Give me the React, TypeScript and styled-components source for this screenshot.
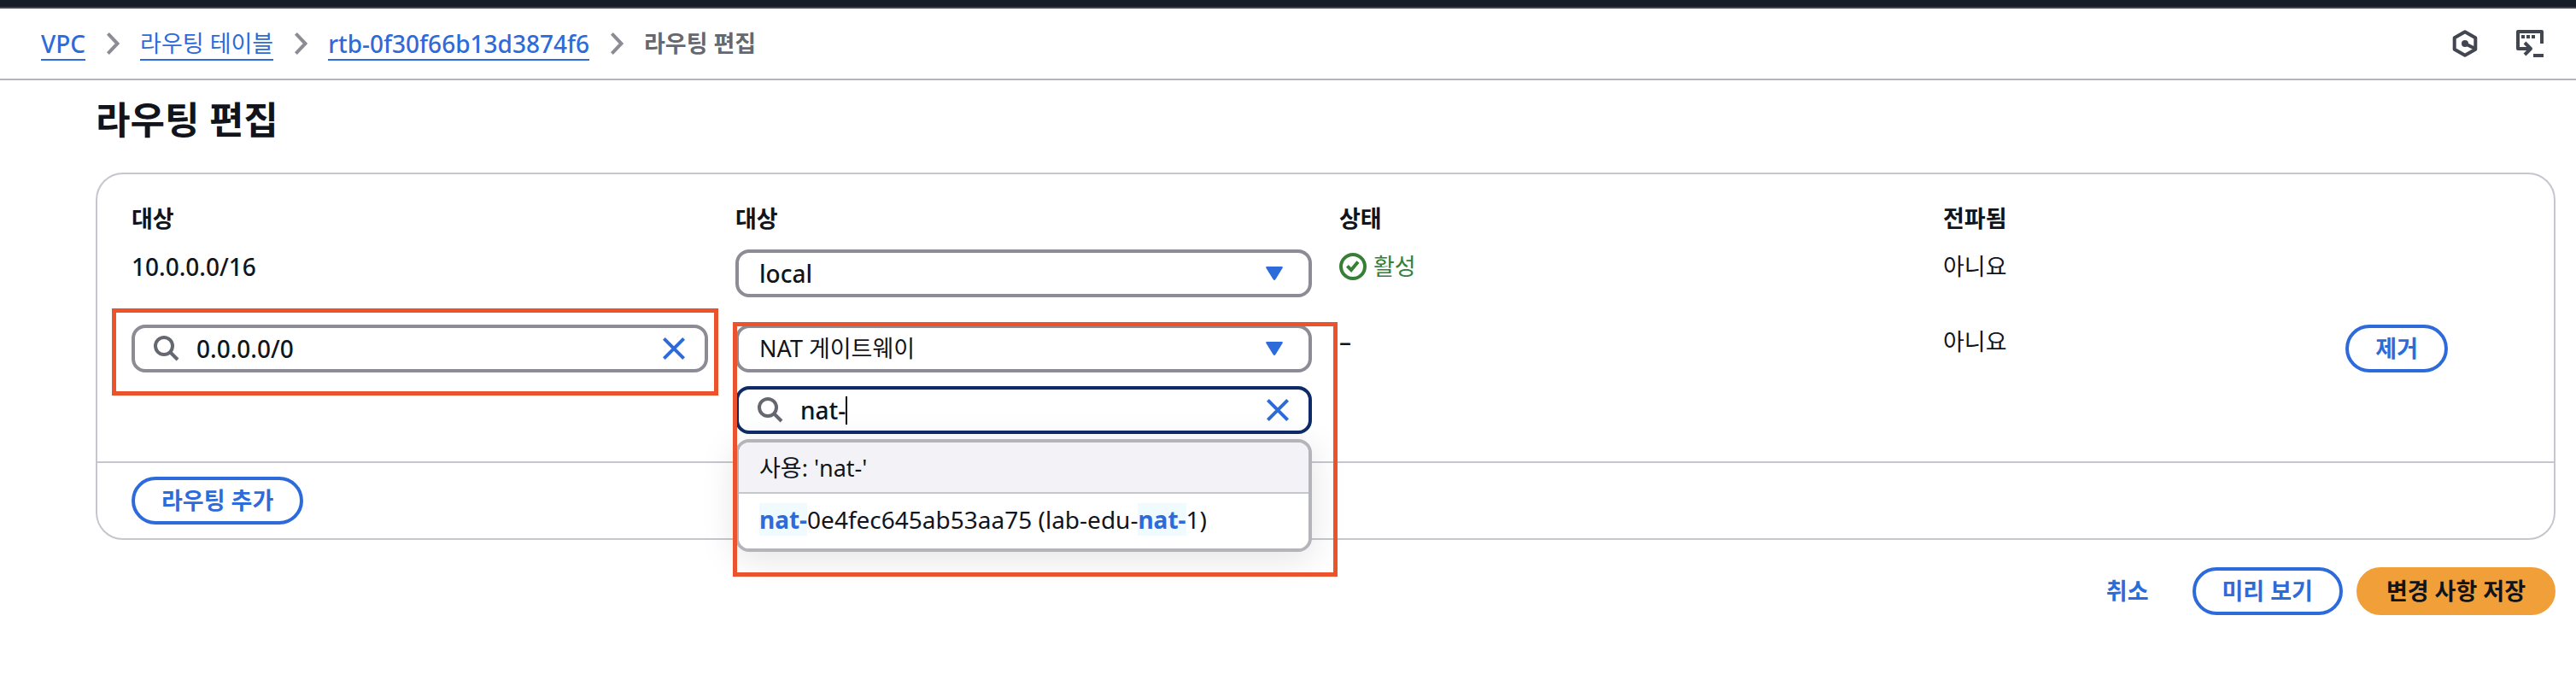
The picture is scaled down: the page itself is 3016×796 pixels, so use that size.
import React from 'react';
import styled, { createGlobalStyle } from 'styled-components';

const color = {
  text: '#11151b',
  muted: '#656871',
  link: '#2d6bdb',
  line: '#c6c6cd',
  control: '#8c8c94',
  focus: '#0f2b66',
  success: '#367f34',
  primary: '#f19f38',
  mark: '#eb532d',
};

const size = {
  latin: '28px',
  hangul: '27px',
};

const GlobalStyle = createGlobalStyle`
  *, *::before, *::after { box-sizing: border-box; }
  body {
    margin: 0;
    background: #fff;
    color: ${color.text};
    font: 400 28px/40px "Noto Sans", "Noto Sans CJK KR", sans-serif;
  }
  input, select, button { font: inherit; color: inherit; }
`;

const TopBar = styled.div`
  height: 10px;
  background: #161d26;
  border-bottom: 2px solid #424650;
`;

const Header = styled.header`
  display: flex;
  align-items: center;
  justify-content: space-between;
  height: 84px;
  padding: 0 38px 0 48px;
  border-bottom: 2px solid #b4b4bb;
`;

const Crumbs = styled.ol`
  display: flex;
  align-items: center;
  gap: 24px;
  margin: 0;
  padding: 0;
  list-style: none;
`;

const Crumb = styled.li`
  display: flex;
  align-items: center;
  gap: 24px;
  color: ${color.muted};
  font-size: ${size.hangul};
  font-weight: 700;
`;

const CrumbLink = styled.a<{ $hangul?: boolean }>`
  height: 40px;
  border-bottom: 2px solid ${color.link};
  color: ${color.link};
  font-size: ${(p) => (p.$hangul ? size.hangul : size.latin)};
  font-weight: ${(p) => (p.$hangul ? 400 : 500)};
  text-decoration: none;
`;

const Tools = styled.div`
  display: flex;
  gap: 44px;
`;

const IconButton = styled.button`
  display: flex;
  padding: 0;
  border: 0;
  background: none;
  cursor: pointer;
`;

const Main = styled.main`
  padding: 16px 24px 76px 112px;
`;

const Title = styled.h1`
  margin: 0 0 32px;
  font-size: 44px;
  line-height: 60px;
  font-weight: 700;
`;

const Panel = styled.section`
  border: 2px solid ${color.line};
  border-radius: 32px;
`;

const Routes = styled.table`
  display: block;
  padding: 32px 40px;
`;

const Group = styled.tbody`
  display: grid;
  gap: 32px;
  margin-top: 16px;
`;

const HeadGroup = styled.thead`
  display: block;
`;

const Row = styled.tr`
  display: grid;
  grid-template-columns: repeat(12, minmax(0, 1fr));
  column-gap: 32px;
`;

const HeadCell = styled.th<{ $span: number }>`
  grid-column: span ${(p) => p.$span};
  padding: 0;
  text-align: left;
  font-size: ${size.hangul};
  font-weight: 700;
`;

const Cell = styled.td<{ $span: number; $hangul?: boolean }>`
  grid-column: span ${(p) => p.$span};
  padding: 0;
  font-size: ${(p) => (p.$hangul ? size.hangul : size.latin)};
  font-weight: ${(p) => (p.$hangul ? 400 : 500)};
`;

const Status = styled.span`
  display: flex;
  align-items: center;
  gap: 8px;
  color: ${color.success};
`;

const Stack = styled.div`
  position: relative;
  display: grid;
  gap: 16px;
`;

const Highlight = styled.div<{ $inset: string }>`
  position: absolute;
  inset: ${(p) => p.$inset};
  z-index: 2;
  border: 5px solid ${color.mark};
  pointer-events: none;
`;

const SelectBox = styled.div`
  display: grid;
  align-items: center;
  color: ${color.link};

  & > * { grid-area: 1 / 1; }
  & > svg { justify-self: end; margin-right: 34px; pointer-events: none; }
`;

const Select = styled.select<{ $hangul?: boolean }>`
  appearance: none;
  width: 100%;
  height: 56px;
  padding: 0 60px 0 24px;
  border: 4px solid ${color.control};
  border-radius: 16px;
  background: #fff;
  color: ${color.text};
  font-size: ${(p) => (p.$hangul ? size.hangul : size.latin)};
  font-weight: ${(p) => (p.$hangul ? 400 : 500)};
`;

const SearchBox = styled.label<{ $focused?: boolean }>`
  display: flex;
  align-items: center;
  height: 56px;
  padding: 0 22px;
  border: 4px solid ${(p) => (p.$focused ? color.focus : color.control)};
  border-radius: 16px;
  background: #fff;
`;

const SearchInput = styled.input`
  field-sizing: content;
  min-width: 0;
  margin-left: 20px;
  padding: 0;
  border: 0;
  outline: 0;
  background: none;
`;

const TextCaret = styled.span`
  width: 2px;
  height: 33px;
  background: #000;
`;

const Spacer = styled.span`
  flex: 1;
`;

const Menu = styled.ul`
  position: absolute;
  z-index: 1;
  top: calc(100% + 6px);
  left: 0;
  right: 0;
  margin: 0;
  padding: 0;
  overflow: hidden;
  list-style: none;
  border: 4px solid #b4b4bb;
  border-radius: 16px;
  background: #fff;
  box-shadow: 0 8px 40px 2px rgba(0, 7, 22, 0.1);
`;

const Option = styled.li<{ $active?: boolean }>`
  padding: ${(p) => (p.$active ? '10px 24px 8px' : '10px 24px 14px')};
  background: ${(p) => (p.$active ? '#f3f3f7' : '#fff')};
  border-bottom: ${(p) => (p.$active ? `2px solid ${color.line}` : '0')};
  font-size: ${(p) => (p.$active ? size.hangul : size.latin)};
  font-weight: 400;
`;

const Match = styled.mark`
  background: #f0fbff;
  color: ${color.link};
  font-weight: 700;
`;

const PanelFooter = styled.div`
  padding: 16px 40px;
  border-top: 2px solid ${color.line};
`;

const Actions = styled.div`
  display: flex;
  justify-content: flex-end;
  gap: 16px;
  margin-top: 32px;
`;

const Button = styled.button<{ $kind?: 'primary' | 'link' }>`
  display: block;
  height: 56px;
  padding: 0 31px;
  border: 4px solid
    ${(p) => (p.$kind === 'primary' ? color.primary : p.$kind === 'link' ? 'transparent' : color.link)};
  border-radius: 28px;
  background: ${(p) => (p.$kind === 'primary' ? color.primary : 'transparent')};
  color: ${(p) => (p.$kind === 'primary' ? color.text : color.link)};
  font-size: ${size.hangul};
  font-weight: 700;
  line-height: 40px;
  white-space: nowrap;
  cursor: pointer;
`;

const Chevron = () => (
  <svg width="16" height="28" viewBox="0 0 16 28" fill="none" stroke={color.control} strokeWidth="4" aria-hidden="true">
    <path d="M2.400 2.400L13.500 14L2.400 25.600" />
  </svg>
);

const HexagonIcon = () => (
  <svg width="32" height="32" viewBox="0 0 32 32" fill="none" stroke="#424650" strokeWidth="4" strokeLinejoin="round" aria-hidden="true">
    <path d="M16 2.200l12.300 7v13.600L16 29.800l-12.300-7V9.200z M16 16l12 6" />
    <circle cx="16" cy="16" r="4" fill="#424650" stroke="none" />
  </svg>
);

const ShellIcon = () => (
  <svg width="32" height="32" viewBox="0 0 32 32" fill="none" stroke="#424650" strokeWidth="4" strokeLinejoin="round" aria-hidden="true">
    <path d="M30 16V2H2v20h15M10 15l7 7-7 7M20 30h12" />
    <path d="M6 8h4M12 8h4M18 8h4" />
  </svg>
);

const SearchIcon = () => (
  <svg width="30" height="30" viewBox="0 0 30 30" fill="none" stroke={color.muted} strokeWidth="4" aria-hidden="true">
    <circle cx="12" cy="12" r="10" />
    <path d="M19 19l9 9" />
  </svg>
);

const ClearIcon = () => (
  <svg width="28" height="28" viewBox="0 0 28 28" fill="none" stroke={color.link} strokeWidth="4" aria-hidden="true">
    <path d="M2.400 2.400l23.200 23.200M25.600 2.400L2.400 25.600" />
  </svg>
);

const CaretIcon = () => (
  <svg width="20" height="16" viewBox="0 0 20 16" fill="currentColor" aria-hidden="true">
    <path d="M1.500 0h17Q20.500 0 19.600 1.800L11.400 15q-1.400 1.800-2.800 0L.4 1.800Q-.5 0 1.500 0z" />
  </svg>
);

const CheckIcon = () => (
  <svg width="32" height="32" viewBox="0 0 32 32" fill="none" stroke="currentColor" strokeWidth="4" aria-hidden="true">
    <circle cx="16" cy="16" r="14" />
    <path d="M9.400 15.400l4.600 4.600 8-9.500" />
  </svg>
);

const trail = [
  { name: 'VPC' },
  { name: '라우팅 테이블', hangul: true },
  { name: 'rtb-0f30f66b13d3874f6' },
];

export default function App() {
  return (
    <>
      <GlobalStyle />
      <TopBar />
      <Header>
        <nav aria-label="breadcrumb">
          <Crumbs>
            {trail.map(({ name, hangul }) => (
              <Crumb key={name}>
                <CrumbLink href="#" $hangul={hangul}>{name}</CrumbLink>
                <Chevron />
              </Crumb>
            ))}
            <Crumb aria-current="page">라우팅 편집</Crumb>
          </Crumbs>
        </nav>
        <Tools>
          <IconButton type="button" aria-label="Amazon Q"><HexagonIcon /></IconButton>
          <IconButton type="button" aria-label="CloudShell"><ShellIcon /></IconButton>
        </Tools>
      </Header>
      <Main>
        <Title>라우팅 편집</Title>
        <Panel>
          <Routes>
            <HeadGroup>
              <Row>
                <HeadCell $span={3}>대상</HeadCell>
                <HeadCell $span={3}>대상</HeadCell>
                <HeadCell $span={3}>상태</HeadCell>
                <HeadCell $span={3}>전파됨</HeadCell>
              </Row>
            </HeadGroup>
            <Group>
              <Row>
                <Cell $span={3}>10.0.0.0/16</Cell>
                <Cell $span={3}>
                  <SelectBox>
                    <Select aria-label="대상" defaultValue="local">
                      <option>local</option>
                    </Select>
                    <CaretIcon />
                  </SelectBox>
                </Cell>
                <Cell $span={3} $hangul>
                  <Status><CheckIcon />활성</Status>
                </Cell>
                <Cell $span={2} $hangul>아니요</Cell>
              </Row>
              <Row>
                <Cell $span={3}>
                  <Stack>
                    <SearchBox>
                      <SearchIcon />
                      <SearchInput aria-label="대상" defaultValue="0.0.0.0/0" />
                      <Spacer />
                      <IconButton type="button" aria-label="지우기"><ClearIcon /></IconButton>
                    </SearchBox>
                    <Highlight $inset="-19px -12px -27px -23px" />
                  </Stack>
                </Cell>
                <Cell $span={3}>
                  <Stack>
                    <SelectBox>
                      <Select $hangul aria-label="대상" defaultValue="NAT 게이트웨이">
                        <option>NAT 게이트웨이</option>
                      </Select>
                      <CaretIcon />
                    </SelectBox>
                    <SearchBox $focused>
                      <SearchIcon />
                      <SearchInput aria-label="NAT 게이트웨이" defaultValue="nat-" />
                      <TextCaret />
                      <Spacer />
                      <IconButton type="button" aria-label="지우기"><ClearIcon /></IconButton>
                    </SearchBox>
                    <Menu role="listbox">
                      <Option $active role="option" aria-selected="true">사용: 'nat-'</Option>
                      <Option role="option" aria-selected="false">
                        <Match>nat-</Match>0e4fec645ab53aa75 (lab-edu-<Match>nat-</Match>1)
                      </Option>
                    </Menu>
                    <Highlight $inset="-3px -30px -167px -3px" />
                  </Stack>
                </Cell>
                <Cell $span={3}>–</Cell>
                <Cell $span={2} $hangul>아니요</Cell>
                <Cell $span={1}>
                  <Button type="button">제거</Button>
                </Cell>
              </Row>
            </Group>
          </Routes>
          <PanelFooter>
            <Button type="button">라우팅 추가</Button>
          </PanelFooter>
        </Panel>
        <Actions>
          <Button type="button" $kind="link">취소</Button>
          <Button type="button">미리 보기</Button>
          <Button type="button" $kind="primary">변경 사항 저장</Button>
        </Actions>
      </Main>
    </>
  );
}
